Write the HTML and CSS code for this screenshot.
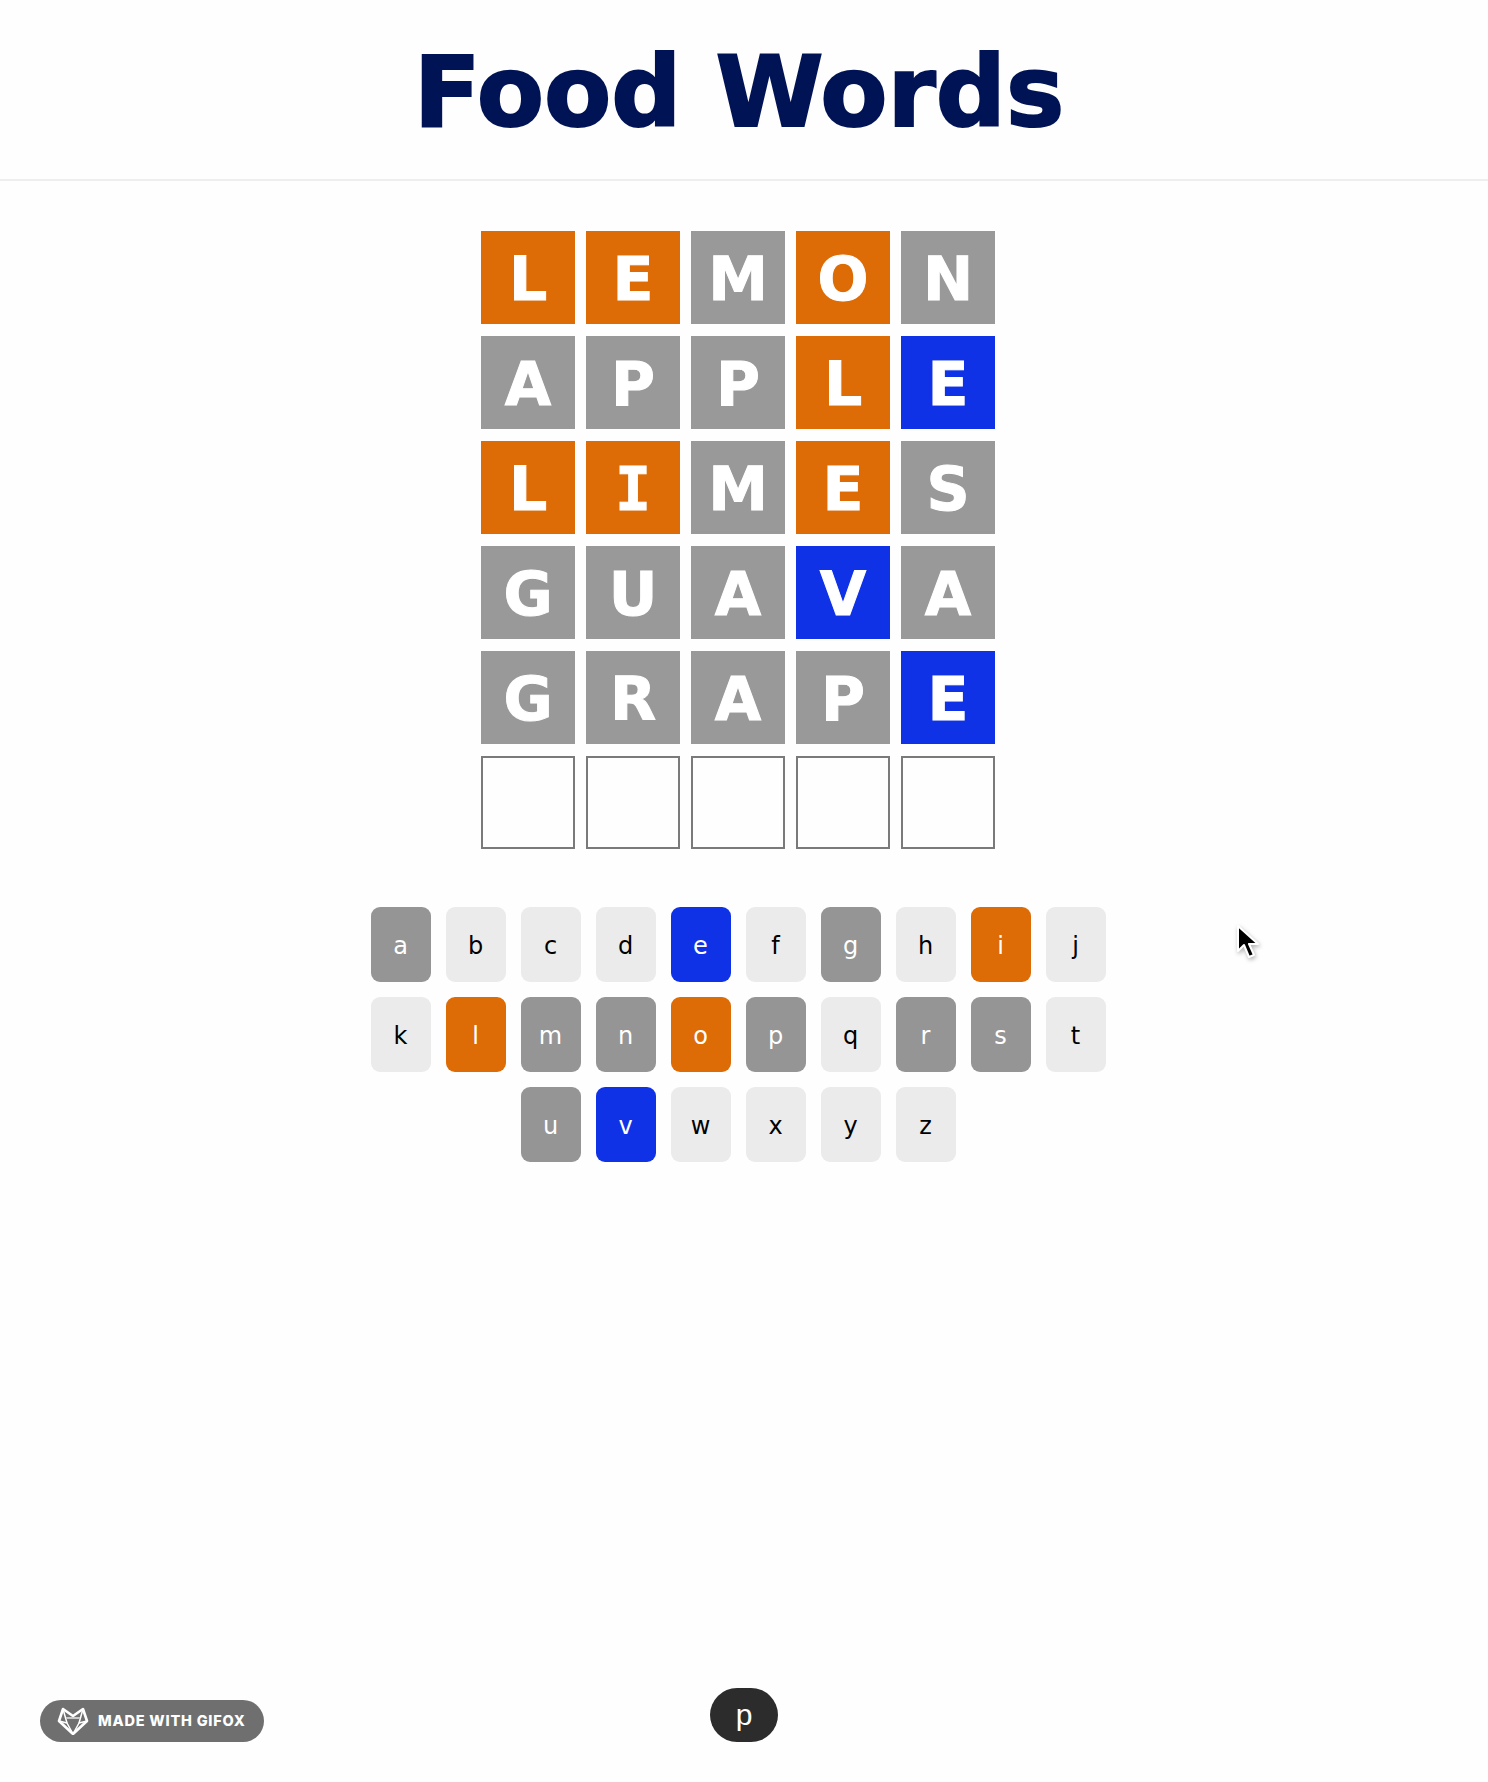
FILE: index.html
```html
<!DOCTYPE html>
<html lang="en">
<head>
    <meta charset="UTF-8">
    <title>Food Words</title>
    <link rel="stylesheet" href="styles.css">
</head>
<body>
    <header class="title-bar">
        <h1>Food Words</h1>
    </header>

    <main class="game">
        <div class="board">
            <div class="tile present">L</div>
            <div class="tile present">E</div>
            <div class="tile absent">M</div>
            <div class="tile present">O</div>
            <div class="tile absent">N</div>

            <div class="tile absent">A</div>
            <div class="tile absent">P</div>
            <div class="tile absent">P</div>
            <div class="tile present">L</div>
            <div class="tile correct">E</div>

            <div class="tile present">L</div>
            <div class="tile present slab">I</div>
            <div class="tile absent">M</div>
            <div class="tile present">E</div>
            <div class="tile absent">S</div>

            <div class="tile absent">G</div>
            <div class="tile absent">U</div>
            <div class="tile absent">A</div>
            <div class="tile correct">V</div>
            <div class="tile absent">A</div>

            <div class="tile absent">G</div>
            <div class="tile absent">R</div>
            <div class="tile absent">A</div>
            <div class="tile absent">P</div>
            <div class="tile correct">E</div>

            <div class="tile empty"></div>
            <div class="tile empty"></div>
            <div class="tile empty"></div>
            <div class="tile empty"></div>
            <div class="tile empty"></div>
        </div>

        <div class="keyboard">
            <div class="key-row">
                <div class="key used">a</div>
                <div class="key">b</div>
                <div class="key">c</div>
                <div class="key">d</div>
                <div class="key hit">e</div>
                <div class="key">f</div>
                <div class="key used">g</div>
                <div class="key">h</div>
                <div class="key near">i</div>
                <div class="key">j</div>
            </div>
            <div class="key-row">
                <div class="key">k</div>
                <div class="key near">l</div>
                <div class="key used">m</div>
                <div class="key used">n</div>
                <div class="key near">o</div>
                <div class="key used">p</div>
                <div class="key">q</div>
                <div class="key used">r</div>
                <div class="key used">s</div>
                <div class="key">t</div>
            </div>
            <div class="key-row">
                <div class="key used">u</div>
                <div class="key hit">v</div>
                <div class="key">w</div>
                <div class="key">x</div>
                <div class="key">y</div>
                <div class="key">z</div>
            </div>
        </div>
    </main>

    <!-- recorder overlays -->
    <svg class="cursor" width="26" height="38" viewBox="0 0 26 38">
        <path d="M3 2 L3 27 L9 21 L14 33 L19 31 L14 20 L23 20 Z" fill="#000" stroke="#fff" stroke-width="2" stroke-linejoin="round"/>
    </svg>

    <div class="gifox-badge">
        <svg class="gifox-logo" width="32" height="28" viewBox="0 0 32 28" fill="none" stroke="#fff" stroke-width="2.6" stroke-linejoin="round">
            <path d="M2 14 L6 2 L16 9 L26 2 L30 14 L16 27 Z"/>
            <path d="M2 14 L10 16 L16 27 L22 16 L30 14" stroke-width="1.5"/>
            <path d="M6 2 L10 16 M26 2 L22 16" stroke-width="1.5"/>
            <path d="M9 11 L23 11" stroke="#c8c8c8" stroke-width="2"/>
        </svg>
        <span>MADE WITH GIFOX</span>
    </div>

    <div class="key-hint">p</div>
</body>
</html>
```

FILE: styles.css
```css
body {
    margin: 0;
    height: 1782px;
    position: relative;
    overflow: hidden;
    background-color: #fefefe;
    font-family: "DejaVu Sans", Verdana, sans-serif;
}

.title-bar {
    height: 179px;
    border-bottom: 2px solid #eeeeee;
    display: flex;
    justify-content: center;
    align-items: center;
}

.title-bar h1 {
    margin: 5px 10px 0 0;
    font-size: 98px;
    font-weight: 700;
    line-height: 1;
    color: #001354;
    -webkit-text-stroke: 2px #001354;
}

.game {
    padding-right: 12px;
    padding-top: 50px;
    display: flex;
    flex-direction: column;
    align-items: center;
    gap: 58px;
}

.board {
    display: grid;
    grid-template-columns: repeat(5, 94px);
    grid-auto-rows: 93px;
    column-gap: 11px;
    row-gap: 12px;
}

.tile {
    box-sizing: border-box;
    padding-top: 2px;
    display: flex;
    justify-content: center;
    align-items: center;
    font-size: 60px;
    font-weight: 700;
    color: #fff;
    -webkit-text-stroke: 1px #fff;
}

.tile.slab {
    font-family: "DejaVu Sans Mono", monospace;
}

.tile.present {
    background-color: #dd6b06;
}

.tile.absent {
    background-color: #999999;
}

.tile.correct {
    background-color: #1032e6;
}

.tile.empty {
    border: 2px solid #7a7a7a;
}

.keyboard {
    display: flex;
    flex-direction: column;
    gap: 15px;
}

.key-row {
    display: flex;
    justify-content: center;
    gap: 15px;
}

.key {
    box-sizing: border-box;
    width: 60px;
    height: 75px;
    padding-top: 2px;
    border-radius: 9px;
    display: flex;
    justify-content: center;
    align-items: center;
    font-size: 24px;
    color: #000;
    background-color: #ebebeb;
}

.key.used {
    background-color: #959595;
    color: #fff;
}

.key.near {
    background-color: #dd6b06;
    color: #fff;
}

.key.hit {
    background-color: #1032e6;
    color: #fff;
}

.cursor {
    position: absolute;
    left: 1235px;
    top: 924px;
    filter: drop-shadow(1px 2px 2px rgba(0, 0, 0, 0.3));
}

.gifox-badge {
    position: absolute;
    left: 40px;
    top: 1700px;
    width: 224px;
    height: 42px;
    box-sizing: border-box;
    padding-left: 17px;
    border-radius: 21px;
    background-color: #6f6f6f;
    display: flex;
    align-items: center;
    gap: 9px;
    color: #fff;
    font-family: Inter, "Open Sans", sans-serif;
    font-size: 14.5px;
    font-weight: 800;
    letter-spacing: 0.8px;
    white-space: nowrap;
}

.gifox-badge span {
    margin-top: -2px;
}

.key-hint {
    position: absolute;
    left: 710px;
    top: 1688px;
    width: 68px;
    height: 54px;
    border-radius: 27px;
    background-color: #2c2c2c;
    color: #fff;
    display: flex;
    justify-content: center;
    align-items: center;
    font-family: "Liberation Sans", Arial, sans-serif;
    font-size: 30px;
}
```
